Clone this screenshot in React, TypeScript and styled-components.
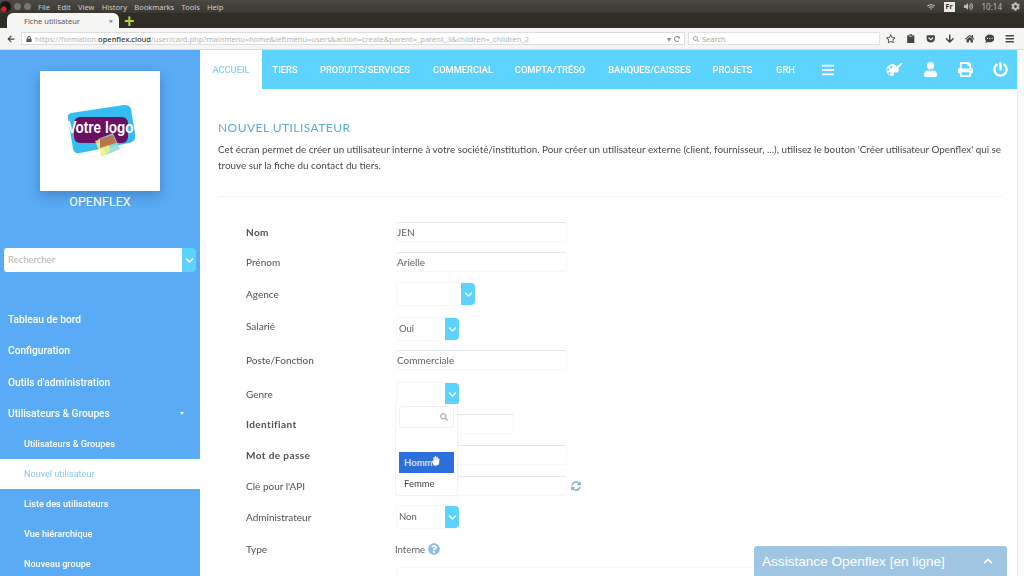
import React from 'react'
import styled, { createGlobalStyle } from 'styled-components'
import {
  FaArrowDown,
  FaArrowLeft,
  FaBars,
  FaChevronDown,
  FaChevronUp,
  FaClipboard,
  FaCog,
  FaCommentDots,
  FaGetPocket,
  FaHandPaper,
  FaHome,
  FaLock,
  FaPowerOff,
  FaPrint,
  FaQuestionCircle,
  FaRedoAlt,
  FaRegStar,
  FaSearch,
  FaSyncAlt,
  FaUser,
  FaVolumeUp,
  FaWifi,
} from 'react-icons/fa'

const GlobalStyle = createGlobalStyle`
  html, body {
    margin: 0;
    padding: 0;
    width: 1024px;
    height: 576px;
    overflow: hidden;
    background: #fff;
  }
`

const Screen = styled.div`
  width: 1024px;
  height: 576px;
  overflow: hidden;
  display: flex;
  flex-direction: column;
  font-family: Lato, sans-serif;
  filter: blur(0.4px);
`

const SystemBar = styled.div`
  height: 13px;
  flex: none;
  display: flex;
  align-items: center;
  background: linear-gradient(#4b4943, #3a3831);
  color: #cfcdc6;
  font-family: 'Noto Sans', sans-serif;
  font-size: 7.5px;
`

const WindowDots = styled.div`
  display: flex;
  align-items: center;
  gap: 3px;
  width: 38px;
  flex: none;
`

const WindowDot = styled.span<{ $close?: boolean }>`
  width: ${({ $close }) => ($close ? 11 : 7)}px;
  height: ${({ $close }) => ($close ? 11 : 7)}px;
  border-radius: 50%;
  background: ${({ $close }) => ($close ? 'radial-gradient(circle at 35% 75%, #d8202a 22%, #161616 30%)' : '#77756e')};
`

const MenuItem = styled.span`
  margin-right: 7.3px;
`

const Tray = styled.div`
  margin-left: auto;
  display: flex;
  align-items: center;
  gap: 9px;
  padding-right: 4px;
  color: #bdbbb4;
  font-size: 8px;
`

const LangBadge = styled.span`
  width: 11px;
  height: 10px;
  background: #e8e8e4;
  color: #3a3831;
  font-size: 7px;
  font-weight: 700;
  text-align: center;
  line-height: 10px;
`

const TabBar = styled.div`
  height: 15px;
  flex: none;
  display: flex;
  align-items: flex-end;
  padding-left: 7px;
  background: #2f2d26;
`

const BrowserTab = styled.div`
  width: 112px;
  height: 15px;
  box-sizing: border-box;
  display: flex;
  align-items: center;
  padding: 0 6px 0 17px;
  background: #f5f5f3;
  border-radius: 6px 6px 0 0;
  color: #555;
  font-family: 'Noto Sans', sans-serif;
  font-size: 7.5px;
  justify-content: space-between;
`

const NewTab = styled.span`
  margin-left: 5px;
  margin-bottom: 1px;
  color: #b3d334;
  font-family: 'Liberation Sans', sans-serif;
  font-size: 18px;
  font-weight: 700;
  line-height: 12px;
`

const NavToolbar = styled.div`
  height: 22px;
  flex: none;
  box-sizing: border-box;
  display: flex;
  align-items: center;
  padding: 0 4px 0 7px;
  background: #f5f5f3;
  border-bottom: 1px solid #d8d8d6;
  color: #444;
  font-size: 8px;
`

const UrlBox = styled.div`
  width: 664px;
  height: 13px;
  margin-left: 6px;
  box-sizing: border-box;
  display: flex;
  align-items: center;
  gap: 3px;
  padding: 0 4px;
  background: #fff;
  border: 1px solid #dcdcdc;
  font-family: 'Noto Sans', sans-serif;
  font-size: 7.5px;
  color: #b4b4b4;
  white-space: nowrap;
  overflow: hidden;
`

const UrlHost = styled.b`
  color: #333;
  font-weight: 500;
`

const UrlActions = styled.span`
  margin-left: auto;
  display: flex;
  align-items: center;
  gap: 3px;
  color: #888;
`

const SearchBox = styled.div`
  width: 192px;
  height: 13px;
  margin-left: 3px;
  box-sizing: border-box;
  display: flex;
  align-items: center;
  gap: 3px;
  padding: 0 4px;
  background: #fff;
  border: 1px solid #e2e2e2;
  color: #aaa;
  font-family: 'Noto Sans', sans-serif;
  font-size: 7.5px;
`

const ToolIcons = styled.div`
  margin-left: auto;
  display: flex;
  align-items: center;
  gap: 10.2px;
  padding-right: 6px;
  color: #444;
  font-size: 9.5px;
`

const Body = styled.div`
  flex: 1;
  min-height: 0;
  display: flex;
`

const Sidebar = styled.aside`
  width: 200px;
  flex: none;
  background: #5aabf5;
  display: flex;
  flex-direction: column;
  color: #fff;
  font-family: Roboto, sans-serif;
`

const Brand = styled.div`
  padding-top: 21px;
  display: flex;
  flex-direction: column;
  align-items: center;
`

const LogoCard = styled.div`
  width: 120px;
  height: 120px;
  background: #fff;
  box-shadow: 0 5px 12px rgba(30, 80, 140, 0.4);
`

const BrandName = styled.div`
  margin-top: 3px;
  font-size: 12.4px;
  line-height: 15px;
  letter-spacing: 0.1px;
`

const SideSearch = styled.div`
  margin: 39px 4px 0 4px;
  height: 24px;
  display: flex;
`

const SideInput = styled.div`
  flex: 1;
  background: #fff;
  border-radius: 3px 0 0 3px;
  padding-left: 4px;
  color: #b5b5b5;
  font-family: Lato, sans-serif;
  font-size: 9.5px;
  line-height: 24px;
`

const ChevronBox = styled.div<{ $w?: number }>`
  width: ${({ $w }) => $w ?? 14}px;
  flex: none;
  display: flex;
  align-items: center;
  justify-content: center;
  background: #5cd2ff;
  border-radius: 0 4px 4px 0;
  color: #fff;
  font-size: 9px;
`

const SideMenu = styled.nav`
  margin-top: 32px;
  display: flex;
  flex-direction: column;
`

const SideItem = styled.div`
  height: 31.3px;
  box-sizing: border-box;
  padding: 0 16px 0 8px;
  display: flex;
  align-items: center;
  justify-content: space-between;
  font-size: 10.2px;
  font-weight: 500;
`

const Caret = styled.span`
  width: 0;
  height: 0;
  border-left: 2.5px solid transparent;
  border-right: 2.5px solid transparent;
  border-top: 3px solid #fff;
`

const SubItem = styled.div<{ $active?: boolean }>`
  height: 30px;
  box-sizing: border-box;
  padding-left: 24px;
  display: flex;
  align-items: center;
  font-size: 9.1px;
  font-weight: ${({ $active }) => ($active ? 400 : 500)};
  color: ${({ $active }) => ($active ? '#8cc4ee' : '#fff')};
  background: ${({ $active }) => ($active ? '#fff' : 'transparent')};
`

const Main = styled.main`
  flex: 1;
  min-width: 0;
  display: flex;
  flex-direction: column;
`

const TopNav = styled.nav`
  height: 39px;
  flex: none;
  display: flex;
  align-items: stretch;
  background: #5cd2ff;
  color: #fff;
  font-family: Roboto, sans-serif;
  font-size: 9.3px;
  font-weight: 500;
`

const NavTab = styled.div<{ $active?: boolean; $w: number }>`
  width: ${({ $w }) => $w}px;
  flex: none;
  display: flex;
  align-items: center;
  justify-content: center;
  background: ${({ $active }) => ($active ? '#fff' : 'transparent')};
  color: ${({ $active }) => ($active ? '#8fd0f5' : '#fff')};
`

const NavBars = styled.div`
  margin-left: 12px;
  display: flex;
  align-items: center;
  font-size: 14px;
`

const NavActions = styled.div`
  margin-left: auto;
  display: flex;
  align-items: center;
  gap: 20px;
  padding-right: 9px;
  font-size: 15px;
`

const Content = styled.div`
  flex: 1;
  min-height: 0;
  padding: 30px 15px 0 18px;
  overflow: hidden;
`

const PageTitle = styled.h1`
  margin: 0;
  font-size: 12px;
  font-weight: 400;
  line-height: 17px;
  color: #5da9d8;
  letter-spacing: 0.45px;
`

const Intro = styled.p`
  margin: 5px 0 0;
  font-size: 9.85px;
  line-height: 16px;
  color: #484848;
`

const FormCard = styled.div`
  margin-top: 23px;
  padding: 20px 0 0 28px;
  border-top: 1px solid #f3f3f3;
`

const Row = styled.div<{ $h: number }>`
  height: ${({ $h }) => $h}px;
  display: flex;
  align-items: center;
  position: relative;
`

const Label = styled.div<{ $bold?: boolean }>`
  width: 150px;
  flex: none;
  font-size: 10px;
  font-weight: ${({ $bold }) => ($bold ? 700 : 400)};
  letter-spacing: ${({ $bold }) => ($bold ? '0.4px' : '0')};
  color: #505050;
`

const Input = styled.div<{ $w?: number }>`
  width: ${({ $w }) => $w ?? 171}px;
  height: 20px;
  box-sizing: border-box;
  padding-left: 0;
  border: 1px solid #f5f8fa;
  border-top-color: #e0e7ec;
  border-radius: 3px;
  font-size: 10px;
  line-height: 18px;
  color: #606060;
`

const Select = styled.div<{ $w: number; $low?: boolean }>`
  width: ${({ $w }) => $w}px;
  height: 24px;
  margin-top: ${({ $low }) => ($low ? 6 : 0)}px;
  display: flex;
  border: 1px solid #f5f8fa;
  border-right: 0;
  border-radius: 3px;
  box-sizing: border-box;
`

const SelectValue = styled.div`
  flex: 1;
  padding-left: 2px;
  font-size: 9.5px;
  line-height: 22px;
  color: #606060;
`

const RefreshIcon = styled.span`
  margin-left: 4px;
  display: flex;
  color: #7fb5c9;
  font-size: 10px;
`

const HelpIcon = styled.span`
  margin-left: 3px;
  display: flex;
  color: #8fbde6;
  font-size: 12px;
`

const StaticValue = styled.span`
  font-size: 9.5px;
  color: #606060;
  margin-left: -1px;
`

const LastInput = styled.div`
  margin: 2px 0 0 150px;
  height: 20px;
  border: 1px solid #f5f8fa;
  border-radius: 3px;
`

const Dropdown = styled.div`
  position: absolute;
  z-index: 2;
  left: 149px;
  top: 25px;
  width: 63px;
  height: 92px;
  box-sizing: border-box;
  padding: 2px 3px;
  background: #fff;
  border: 1px solid #f0f2f4;
  border-top: 0;
  border-radius: 0 0 3px 3px;
`

const DropSearch = styled.div`
  height: 22px;
  box-sizing: border-box;
  display: flex;
  align-items: center;
  justify-content: flex-end;
  padding-right: 5px;
  border: 1px solid #edf0f2;
  border-radius: 3px;
  color: #b0b0b0;
  font-size: 8px;
`

const DropOption = styled.div<{ $active?: boolean; $first?: boolean }>`
  height: 21px;
  margin-top: ${({ $first }) => ($first ? 24 : 0)}px;
  box-sizing: border-box;
  display: flex;
  align-items: center;
  padding-left: 5px;
  font-size: 9.5px;
  font-weight: ${({ $active }) => ($active ? 700 : 400)};
  background: ${({ $active }) => ($active ? '#2a6fdc' : 'transparent')};
  color: ${({ $active }) => ($active ? '#cfe0fa' : '#444')};
  position: relative;
`

const HandCursor = styled.span`
  position: absolute;
  left: 32px;
  top: 4px;
  display: flex;
  color: #fff;
  font-size: 9px;
  filter: drop-shadow(0 0 0.6px #222);
`

const Scrollbar = styled.div`
  width: 7px;
  flex: none;
  background: #fbfbfb;
  border-left: 1px solid #ececec;
  box-sizing: border-box;
`

const ChatWidget = styled.div`
  position: absolute;
  left: 754px;
  top: 546px;
  width: 253px;
  height: 30px;
  box-sizing: border-box;
  padding: 0 14px 0 8px;
  display: flex;
  align-items: center;
  justify-content: space-between;
  background: #9fc5e3;
  border-radius: 3px 3px 0 0;
  color: #fff;
  font-family: 'Liberation Sans', sans-serif;
  font-size: 13.6px;
  white-space: nowrap;
`

const ChatChevron = styled.span`
  display: flex;
  font-size: 10px;
`

const Logo = () => (
  <svg width="120" height="120" viewBox="0 0 120 120">
    <path d="M28 47 C27 44 29 43 31 42 L84 34 C88 34 90 35 91 38 L95 62 C96 68 94 71 89 72 L40 82 C36 83 34 81 33 78 Z" fill="#35bdf2" />
    <rect x="34" y="46" width="54" height="26" rx="6" fill="#6a0f62" />
    <path d="M58 68 L73 62 L80 78 L66 84 Z" fill="#8fdccb" opacity="0.85" />
    <path d="M55 70 L68 66 L70 80 L62 86 Z" fill="#f3ee7d" opacity="0.85" />
    <path d="M60 68 L73 64 L76 72 L60 77 Z" fill="#b9764e" />
    <text x="60.5" y="62" textAnchor="middle" fontFamily="'Liberation Sans', sans-serif" fontWeight="700" fontSize="17" fill="#fff" textLength="66" lengthAdjust="spacingAndGlyphs">
      Votre logo
    </text>
  </svg>
)

// palette with the brush sticking out at the top right, not in the icon packs
const PaletteBrush = () => (
  <svg width="17" height="15" viewBox="0 0 17 15" fill="#fff">
    <path
      fillRule="evenodd"
      d="M6.5 2.2C3 2.2.4 4.8.4 8s2.6 6 5.8 6c1.3 0 1.9-.8 1.6-1.8-.3-1 .3-1.8 1.4-1.8h1.6c1.4 0 2.2-1 2-2.3-.4-3.300-3.300-5.900-6.300-5.900ZM3.400 7.500a1.200 1.200 0 1 1 0-.01ZM6.300 5.300a1.200 1.200 0 1 1 0-.01ZM4.700 11.300a1.200 1.200 0 1 1 0-.01Z"
    />
    <path d="M9.500 5.500 15.500.8l1 .9-5 5.300c-.4.400-1 .500-1.500.100-.500-.400-.900-.300-.500-.600Z" />
  </svg>
)

const menus = ['File', 'Edit', 'View', 'History', 'Bookmarks', 'Tools', 'Help']

const tabs = [
  { label: 'ACCUEIL', w: 62, active: true },
  { label: 'TIERS', w: 46 },
  { label: 'PRODUITS/SERVICES', w: 114 },
  { label: 'COMMERCIAL', w: 82 },
  { label: 'COMPTA/TRÉSO', w: 92 },
  { label: 'BANQUES/CAISSES', w: 107 },
  { label: 'PROJETS', w: 59 },
  { label: 'GRH', w: 47 },
]

const App = () => {
  return (
    <Screen>
      <GlobalStyle />
      <SystemBar>
        <WindowDots>
          <WindowDot $close />
          <WindowDot />
          <WindowDot />
        </WindowDots>
        {menus.map((m) => (
          <MenuItem key={m}>{m}</MenuItem>
        ))}
        <Tray>
          <FaWifi size={8} />
          <LangBadge>Fr</LangBadge>
          <FaVolumeUp size={9} />
          <span>10:14</span>
          <FaCog size={9} />
        </Tray>
      </SystemBar>
      <TabBar>
        <BrowserTab>
          <span>Fiche utilisateur</span>
          <span>×</span>
        </BrowserTab>
        <NewTab>+</NewTab>
      </TabBar>
      <NavToolbar>
        <FaArrowLeft size={8} />
        <UrlBox>
          <FaLock size={6} color="#555" />
          <span>
            https://formation.<UrlHost>openflex.cloud</UrlHost>/user/card.php?mainmenu=home&amp;leftmenu=users&amp;action=create&amp;parent=_parent_3&amp;children=_children_2
          </span>
          <UrlActions>
            <span>▾</span>
            <FaRedoAlt size={6} />
          </UrlActions>
        </UrlBox>
        <SearchBox>
          <FaSearch size={6} />
          Search
        </SearchBox>
        <ToolIcons>
          <FaRegStar />
          <FaClipboard />
          <FaGetPocket />
          <FaArrowDown />
          <FaHome />
          <FaCommentDots />
          <FaBars />
        </ToolIcons>
      </NavToolbar>
      <Body>
        <Sidebar>
          <Brand>
            <LogoCard>
              <Logo />
            </LogoCard>
            <BrandName>OPENFLEX</BrandName>
          </Brand>
          <SideSearch>
            <SideInput>Rechercher</SideInput>
            <ChevronBox>
              <FaChevronDown />
            </ChevronBox>
          </SideSearch>
          <SideMenu>
            <SideItem>Tableau de bord</SideItem>
            <SideItem>Configuration</SideItem>
            <SideItem>Outils d'administration</SideItem>
            <SideItem>
              Utilisateurs &amp; Groupes
              <Caret />
            </SideItem>
            <SubItem>Utilisateurs &amp; Groupes</SubItem>
            <SubItem $active>Nouvel utilisateur</SubItem>
            <SubItem>Liste des utilisateurs</SubItem>
            <SubItem>Vue hiérarchique</SubItem>
            <SubItem>Nouveau groupe</SubItem>
          </SideMenu>
        </Sidebar>
        <Main>
          <TopNav>
            {tabs.map((t) => (
              <NavTab key={t.label} $w={t.w} $active={t.active}>
                {t.label}
              </NavTab>
            ))}
            <NavBars>
              <FaBars />
            </NavBars>
            <NavActions>
              <PaletteBrush />
              <FaUser />
              <FaPrint />
              <FaPowerOff />
            </NavActions>
          </TopNav>
          <Content>
            <PageTitle>NOUVEL UTILISATEUR</PageTitle>
            <Intro>
              Cet écran permet de créer un utilisateur interne à votre société/institution. Pour créer un utilisateur externe (client, fournisseur, ...), utilisez le bouton 'Créer utilisateur Openflex' qui se trouve sur la fiche du contact du tiers.
            </Intro>
            <FormCard>
              <Row $h={30}>
                <Label $bold>Nom</Label>
                <Input>JEN</Input>
              </Row>
              <Row $h={30}>
                <Label>Prénom</Label>
                <Input>Arielle</Input>
              </Row>
              <Row $h={34}>
                <Label>Agence</Label>
                <Select $w={79}>
                  <SelectValue />
                  <ChevronBox>
                    <FaChevronDown />
                  </ChevronBox>
                </Select>
              </Row>
              <Row $h={30}>
                <Label>Salarié</Label>
                <Select $w={63} $low>
                  <SelectValue>Oui</SelectValue>
                  <ChevronBox>
                    <FaChevronDown />
                  </ChevronBox>
                </Select>
              </Row>
              <Row $h={38}>
                <Label>Poste/Fonction</Label>
                <Input>Commerciale</Input>
              </Row>
              <Row $h={30}>
                <Label>Genre</Label>
                <Select $w={63}>
                  <SelectValue />
                  <ChevronBox>
                    <FaChevronDown />
                  </ChevronBox>
                </Select>
                <Dropdown>
                  <DropSearch>
                    <FaSearch />
                  </DropSearch>
                  <DropOption $active $first>
                    Homme
                    <HandCursor>
                      <FaHandPaper />
                    </HandCursor>
                  </DropOption>
                  <DropOption>Femme</DropOption>
                </Dropdown>
              </Row>
              <Row $h={30}>
                <Label $bold>Identifiant</Label>
                <Input $w={118} />
              </Row>
              <Row $h={32}>
                <Label $bold>Mot de passe</Label>
                <Input />
              </Row>
              <Row $h={30}>
                <Label>Clé pour l'API</Label>
                <Input />
                <RefreshIcon>
                  <FaSyncAlt />
                </RefreshIcon>
              </Row>
              <Row $h={32}>
                <Label>Administrateur</Label>
                <Select $w={63}>
                  <SelectValue>Non</SelectValue>
                  <ChevronBox>
                    <FaChevronDown />
                  </ChevronBox>
                </Select>
              </Row>
              <Row $h={32}>
                <Label>Type</Label>
                <StaticValue>Interne</StaticValue>
                <HelpIcon>
                  <FaQuestionCircle />
                </HelpIcon>
              </Row>
              <LastInput />
            </FormCard>
          </Content>
        </Main>
        <Scrollbar />
      </Body>
      <ChatWidget>
        Assistance Openflex [en ligne]
        <ChatChevron>
          <FaChevronUp />
        </ChatChevron>
      </ChatWidget>
    </Screen>
  )
}

export default App
